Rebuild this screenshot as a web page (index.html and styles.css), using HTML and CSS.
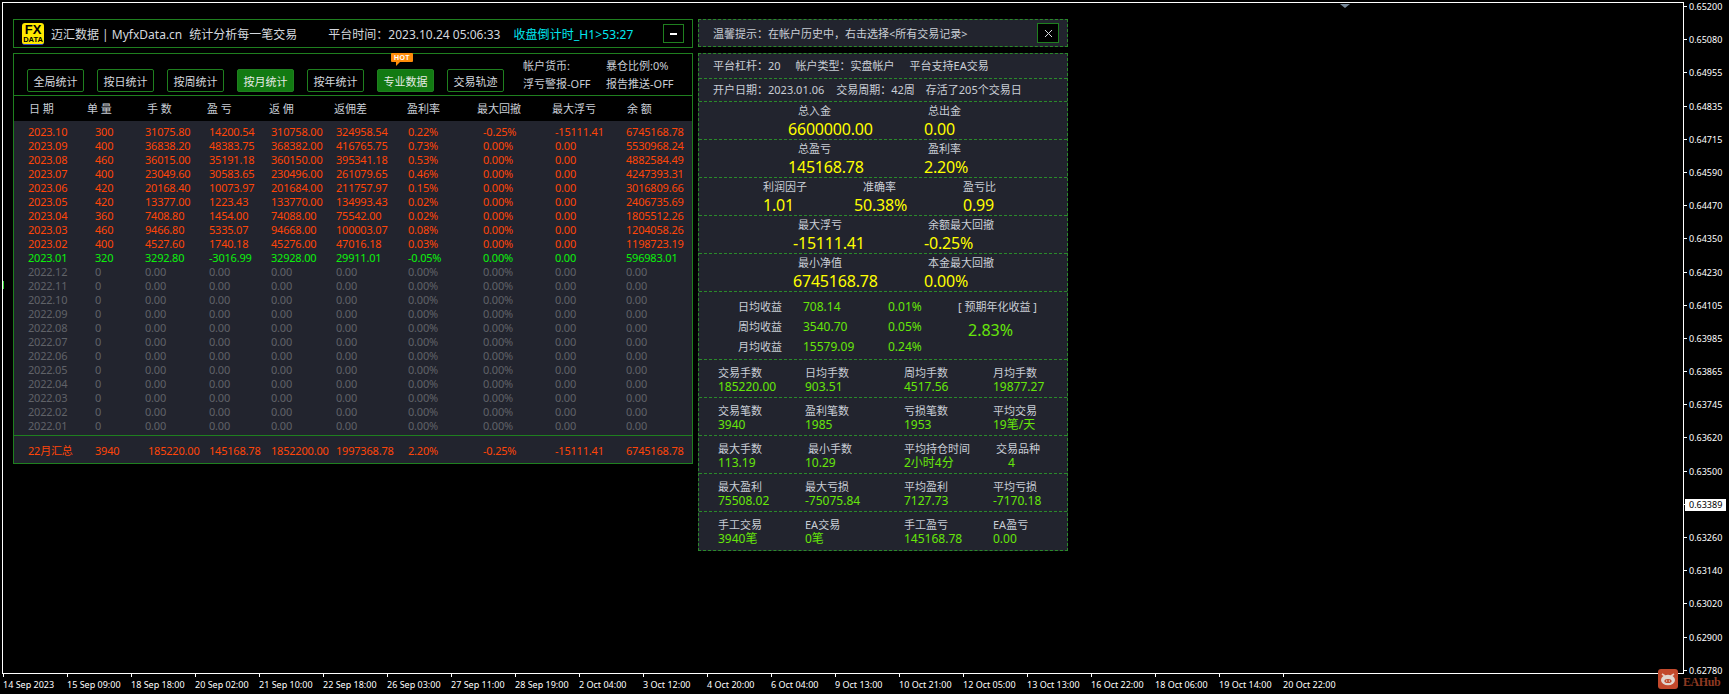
FILE: index.html
```html
<!DOCTYPE html>
<html lang="zh-CN">
<head>
<meta charset="utf-8">
<title>MyfxData</title>
<link rel="stylesheet" href="styles.css">
</head>
<body>
<div class="chart">
  <div class="plot">
    <span class="ask-mark"></span>
    <span class="side-mark"></span>

    <section class="left-win">
      <header class="title-bar">
        <span class="logo"><b>FX</b><i>DATA</i></span>
        <span class="brand">迈汇数据 | MyfxData.cn</span>
        <span class="slogan">统计分析每一笔交易</span>
        <span class="clock">平台时间：2023.10.24 05:06:33</span>
        <span class="countdown">收盘倒计时_H1&gt;53:27</span>
        <span class="min-btn"><i></i></span>
      </header>
      <div class="main-box">
        <div class="toolbar">
          <span class="btn">全局统计</span>
          <span class="btn">按日统计</span>
          <span class="btn">按周统计</span>
          <span class="btn on">按月统计</span>
          <span class="btn">按年统计</span>
          <span class="btn on hot-wrap"><span class="hot">HOT</span>专业数据</span>
          <span class="btn">交易轨迹</span>
          <div class="acct">
            <span>帐户货币:</span><span>暴仓比例:0%</span>
            <span>浮亏警报-OFF</span><span>报告推送-OFF</span>
          </div>
        </div>
        <div class="thead">
          <span>日 期</span><span>单 量</span><span>手 数</span><span>盈 亏</span><span>返 佣</span><span>返佣差</span><span>盈利率</span><span>最大回撤</span><span>最大浮亏</span><span>余 额</span>
        </div>
        <div class="tbody">
          <div class="tr red"><span>2023.10</span><span>300</span><span>31075.80</span><span>14200.54</span><span>310758.00</span><span>324958.54</span><span>0.22%</span><span>-0.25%</span><span>-15111.41</span><span>6745168.78</span></div>
          <div class="tr red"><span>2023.09</span><span>400</span><span>36838.20</span><span>48383.75</span><span>368382.00</span><span>416765.75</span><span>0.73%</span><span>0.00%</span><span>0.00</span><span>5530968.24</span></div>
          <div class="tr red"><span>2023.08</span><span>460</span><span>36015.00</span><span>35191.18</span><span>360150.00</span><span>395341.18</span><span>0.53%</span><span>0.00%</span><span>0.00</span><span>4882584.49</span></div>
          <div class="tr red"><span>2023.07</span><span>400</span><span>23049.60</span><span>30583.65</span><span>230496.00</span><span>261079.65</span><span>0.46%</span><span>0.00%</span><span>0.00</span><span>4247393.31</span></div>
          <div class="tr red"><span>2023.06</span><span>420</span><span>20168.40</span><span>10073.97</span><span>201684.00</span><span>211757.97</span><span>0.15%</span><span>0.00%</span><span>0.00</span><span>3016809.66</span></div>
          <div class="tr red"><span>2023.05</span><span>420</span><span>13377.00</span><span>1223.43</span><span>133770.00</span><span>134993.43</span><span>0.02%</span><span>0.00%</span><span>0.00</span><span>2406735.69</span></div>
          <div class="tr red"><span>2023.04</span><span>360</span><span>7408.80</span><span>1454.00</span><span>74088.00</span><span>75542.00</span><span>0.02%</span><span>0.00%</span><span>0.00</span><span>1805512.26</span></div>
          <div class="tr red"><span>2023.03</span><span>460</span><span>9466.80</span><span>5335.07</span><span>94668.00</span><span>100003.07</span><span>0.08%</span><span>0.00%</span><span>0.00</span><span>1204058.26</span></div>
          <div class="tr red"><span>2023.02</span><span>400</span><span>4527.60</span><span>1740.18</span><span>45276.00</span><span>47016.18</span><span>0.03%</span><span>0.00%</span><span>0.00</span><span>1198723.19</span></div>
          <div class="tr lime"><span>2023.01</span><span>320</span><span>3292.80</span><span>-3016.99</span><span>32928.00</span><span>29911.01</span><span>-0.05%</span><span>0.00%</span><span>0.00</span><span>596983.01</span></div>
          <div class="tr dim"><span>2022.12</span><span>0</span><span>0.00</span><span>0.00</span><span>0.00</span><span>0.00</span><span>0.00%</span><span>0.00%</span><span>0.00</span><span>0.00</span></div>
          <div class="tr dim"><span>2022.11</span><span>0</span><span>0.00</span><span>0.00</span><span>0.00</span><span>0.00</span><span>0.00%</span><span>0.00%</span><span>0.00</span><span>0.00</span></div>
          <div class="tr dim"><span>2022.10</span><span>0</span><span>0.00</span><span>0.00</span><span>0.00</span><span>0.00</span><span>0.00%</span><span>0.00%</span><span>0.00</span><span>0.00</span></div>
          <div class="tr dim"><span>2022.09</span><span>0</span><span>0.00</span><span>0.00</span><span>0.00</span><span>0.00</span><span>0.00%</span><span>0.00%</span><span>0.00</span><span>0.00</span></div>
          <div class="tr dim"><span>2022.08</span><span>0</span><span>0.00</span><span>0.00</span><span>0.00</span><span>0.00</span><span>0.00%</span><span>0.00%</span><span>0.00</span><span>0.00</span></div>
          <div class="tr dim"><span>2022.07</span><span>0</span><span>0.00</span><span>0.00</span><span>0.00</span><span>0.00</span><span>0.00%</span><span>0.00%</span><span>0.00</span><span>0.00</span></div>
          <div class="tr dim"><span>2022.06</span><span>0</span><span>0.00</span><span>0.00</span><span>0.00</span><span>0.00</span><span>0.00%</span><span>0.00%</span><span>0.00</span><span>0.00</span></div>
          <div class="tr dim"><span>2022.05</span><span>0</span><span>0.00</span><span>0.00</span><span>0.00</span><span>0.00</span><span>0.00%</span><span>0.00%</span><span>0.00</span><span>0.00</span></div>
          <div class="tr dim"><span>2022.04</span><span>0</span><span>0.00</span><span>0.00</span><span>0.00</span><span>0.00</span><span>0.00%</span><span>0.00%</span><span>0.00</span><span>0.00</span></div>
          <div class="tr dim"><span>2022.03</span><span>0</span><span>0.00</span><span>0.00</span><span>0.00</span><span>0.00</span><span>0.00%</span><span>0.00%</span><span>0.00</span><span>0.00</span></div>
          <div class="tr dim"><span>2022.02</span><span>0</span><span>0.00</span><span>0.00</span><span>0.00</span><span>0.00</span><span>0.00%</span><span>0.00%</span><span>0.00</span><span>0.00</span></div>
          <div class="tr dim"><span>2022.01</span><span>0</span><span>0.00</span><span>0.00</span><span>0.00</span><span>0.00</span><span>0.00%</span><span>0.00%</span><span>0.00</span><span>0.00</span></div>
        </div>
        <div class="tr red total"><span>22月汇总</span><span>3940</span><span class="nudge">185220.00</span><span>145168.78</span><span>1852200.00</span><span>1997368.78</span><span>2.20%</span><span>-0.25%</span><span>-15111.41</span><span>6745168.78</span></div>
      </div>
    </section>

    <section class="right-win">
      <div class="tip">
        <span>温馨提示：在帐户历史中，右击选择&lt;所有交易记录&gt;</span>
        <span class="close"><svg width="9" height="9" viewBox="0 0 9 9"><path d="M1 1l7 7M8 1l-7 7" stroke="#d8dce0" stroke-width="1" fill="none"/></svg></span>
      </div>
      <div class="stats">
        <div class="info-row r1"><span class="i1">平台杠杆：20</span><span class="i2">帐户类型：实盘帐户</span><span class="i3">平台支持EA交易</span></div>
        <div class="info-row r2"><span class="i1">开户日期：2023.01.06</span><span class="i4">交易周期：42周</span><span class="i5">存活了205个交易日</span></div>

        <div class="big two"><div><span class="lb">总入金</span><span class="val">6600000.00</span></div><div><span class="lb">总出金</span><span class="val">0.00</span></div></div>
        <div class="big two"><div><span class="lb">总盈亏</span><span class="val">145168.78</span></div><div><span class="lb">盈利率</span><span class="val">2.20%</span></div></div>
        <div class="big three"><div><span class="lb">利润因子</span><span class="val">1.01</span></div><div><span class="lb">准确率</span><span class="val out">50.38%</span></div><div><span class="lb">盈亏比</span><span class="val">0.99</span></div></div>
        <div class="big two"><div><span class="lb">最大浮亏</span><span class="val in">-15111.41</span></div><div><span class="lb">余额最大回撤</span><span class="val">-0.25%</span></div></div>
        <div class="big two"><div><span class="lb">最小净值</span><span class="val in">6745168.78</span></div><div><span class="lb">本金最大回撤</span><span class="val">0.00%</span></div></div>

        <div class="avg">
          <div class="avg-grid">
            <span>日均收益</span><b>708.14</b><b>0.01%</b>
            <span>周均收益</span><b>3540.70</b><b>0.05%</b>
            <span>月均收益</span><b>15579.09</b><b>0.24%</b>
          </div>
          <div class="annual"><span>[ 预期年化收益 ]</span><b>2.83%</b></div>
        </div>

        <div class="mini"><div><span>交易手数</span><b>185220.00</b></div><div><span>日均手数</span><b>903.51</b></div><div><span>周均手数</span><b>4517.56</b></div><div><span>月均手数</span><b>19877.27</b></div></div>
        <div class="mini"><div><span>交易笔数</span><b>3940</b></div><div><span>盈利笔数</span><b>1985</b></div><div><span>亏损笔数</span><b>1953</b></div><div><span>平均交易</span><b>19笔/天</b></div></div>
        <div class="mini"><div><span>最大手数</span><b>113.19</b></div><div><span class="shift">最小手数</span><b>10.29</b></div><div><span>平均持仓时间</span><b>2小时4分</b></div><div><span class="shift">交易品种</span><b class="four">4</b></div></div>
        <div class="mini"><div><span>最大盈利</span><b>75508.02</b></div><div><span>最大亏损</span><b>-75075.84</b></div><div><span>平均盈利</span><b>7127.73</b></div><div><span>平均亏损</span><b>-7170.18</b></div></div>
        <div class="mini last"><div><span>手工交易</span><b>3940笔</b></div><div><span>EA交易</span><b>0笔</b></div><div><span>手工盈亏</span><b>145168.78</b></div><div><span>EA盈亏</span><b>0.00</b></div></div>
      </div>
    </section>
  </div>

  <div class="price-axis">
    <span>0.65200</span><span>0.65080</span><span>0.64955</span><span>0.64835</span><span>0.64715</span><span>0.64590</span><span>0.64470</span><span>0.64350</span><span>0.64230</span><span>0.64105</span><span>0.63985</span><span>0.63865</span><span>0.63745</span><span>0.63620</span><span>0.63500</span><span class="now"><b>0.63389</b></span><span>0.63260</span><span>0.63140</span><span>0.63020</span><span>0.62900</span><span>0.62780</span>
  </div>

  <div class="time-axis">
    <span>14 Sep 2023</span><span>15 Sep 09:00</span><span>18 Sep 18:00</span><span>20 Sep 02:00</span><span>21 Sep 10:00</span><span>22 Sep 18:00</span><span>26 Sep 03:00</span><span>27 Sep 11:00</span><span>28 Sep 19:00</span><span>2 Oct 04:00</span><span>3 Oct 12:00</span><span>4 Oct 20:00</span><span>6 Oct 04:00</span><span>9 Oct 13:00</span><span>10 Oct 21:00</span><span>12 Oct 05:00</span><span>13 Oct 13:00</span><span>16 Oct 22:00</span><span>18 Oct 06:00</span><span>19 Oct 14:00</span><span>20 Oct 22:00</span>
  </div>

  <div class="watermark">
    <svg class="pig" width="20" height="20" viewBox="0 0 20 20">
      <rect width="20" height="20" rx="3" fill="#c2492c"/>
      <path d="M4 5l3 2M16 5l-3 2" stroke="#e8c9bd" stroke-width="1.6" fill="none"/>
      <ellipse cx="10" cy="11" rx="7" ry="5.2" fill="#e0d6cf"/>
      <ellipse cx="10" cy="12" rx="3.6" ry="2.1" fill="#c2492c"/>
      <circle cx="8.6" cy="12" r=".7" fill="#e0d6cf"/>
      <circle cx="11.4" cy="12" r=".7" fill="#e0d6cf"/>
    </svg>
    <span>EAHub</span>
  </div>
</div>
</body>
</html>
```

FILE: styles.css
```css
* { box-sizing: border-box; }
html, body { margin: 0; padding: 0; background: #000; }
body {
  font-family: "Noto Sans", "Noto Sans CJK SC", sans-serif;
  font-size: 11px;
  color: #c9ced6;
}
span, b, i { font-weight: 400; font-style: normal; }

.chart {
  position: relative;
  width: 1729px;
  height: 694px;
  padding: 2px 0 0 2px;
  display: grid;
  grid-template-columns: 1682px 45px;
  grid-template-rows: 672px 20px;
  overflow: hidden;
}

.plot {
  position: relative;
  border: 1px solid #fff;
  background: #000;
}
.ask-mark {
  position: absolute;
  left: 1337px;
  top: 1px;
  border-left: 5px solid transparent;
  border-right: 5px solid transparent;
  border-top: 4px solid #778899;
}
.side-mark {
  position: absolute;
  left: 0;
  top: 278px;
  width: 1px;
  height: 8px;
  background: #32cd32;
}

/* ---- left window ---- */
.left-win {
  position: absolute;
  left: 10px;
  top: 16px;
  width: 680px;
  display: flex;
  flex-direction: column;
  gap: 5px;
}
.title-bar {
  height: 29px;
  border: 1px solid #1f7f1f;
  display: flex;
  align-items: center;
  padding: 0 8px;
  font-size: 12px;
  color: #d4d8de;
  background: #000;
}
.logo {
  width: 22px;
  height: 22px;
  border-radius: 3px;
  background: #ffe800;
  border-bottom: 1px solid #2b46c8;
  display: flex;
  flex-direction: column;
  align-items: center;
  color: #000;
  font-family: "Liberation Sans", sans-serif;
  line-height: 1;
  padding-top: 1px;
}
.logo b { font-size: 13px; font-weight: 700; line-height: 12px; }
.logo i { font-size: 7.5px; font-weight: 700; line-height: 8px; }
.brand { margin-left: 7px; }
.slogan { margin-left: 7px; }
.clock { margin-left: 31px; }
.countdown { margin-left: 13px; color: #00e8f0; letter-spacing: .1px; }
.min-btn {
  margin-left: auto;
  width: 21px;
  height: 19px;
  border: 1px solid #1f7f1f;
  display: flex;
  align-items: center;
  justify-content: center;
}
.min-btn i { width: 7px; height: 2px; background: #fff; }

.main-box {
  border: 1px solid #1f7f1f;
  height: 411px;
  display: flex;
  flex-direction: column;
  background: #22242e;
}
.toolbar {
  height: 42px;
  flex: none;
  background: #000;
  border-bottom: 1px solid #1f7f1f;
  padding: 15px 0 3px 13px;
  display: flex;
  gap: 13px;
}
.btn {
  position: relative;
  width: 57px;
  height: 23px;
  border: 1px solid #1f7f1f;
  border-radius: 2px;
  color: #d4d8de;
  display: flex;
  align-items: center;
  justify-content: center;
}
.btn.on { background: #127a12; color: #e6ebe6; }
.hot {
  position: absolute;
  left: 13px;
  top: -17px;
  width: 22px;
  height: 9px;
  background: #ff8c0a;
  border-radius: 1px;
  color: #fff;
  font: 700 7px/9px "Liberation Sans", sans-serif;
  text-align: center;
  letter-spacing: .4px;
}
.hot::after {
  content: "";
  position: absolute;
  left: 5px;
  top: 9px;
  border-top: 4px solid #ff8c0a;
  border-right: 4px solid transparent;
}
.acct {
  margin: -12px 0 0 6px;
  display: grid;
  grid-template-columns: 83px auto;
  grid-auto-rows: 18px;
  line-height: 18px;
  align-self: flex-start;
  white-space: nowrap;
}
.thead {
  height: 25px;
  flex: none;
  background: #000;
  display: grid;
  grid-template-columns: 58px 60px 60px 62px 65px 73px 70px 75px 75px auto;
  padding-left: 15px;
  line-height: 25px;
  white-space: nowrap;
}
.tbody { padding-top: 4px; height: 314px; flex: none; }
.tr {
  height: 14px;
  line-height: 14px;
  display: grid;
  grid-template-columns: 67px 50px 64px 62px 65px 72px 75px 72px 71px auto;
  padding-left: 14px;
  white-space: nowrap;
  letter-spacing: -.2px;
}
.red { color: #ff4508; }
.lime { color: #0cf00c; }
.dim { color: #606268; }
.total {
  flex: 1;
  height: auto;
  line-height: 29px;
  border-top: 1px solid #1f7f1f;
}
.nudge { padding-left: 3px; }

/* ---- right window ---- */
.right-win {
  position: absolute;
  left: 695px;
  top: 16px;
  width: 370px;
  display: flex;
  flex-direction: column;
  gap: 6px;
}
.tip {
  height: 28px;
  border: 1px dashed #2a8a2a;
  background: #22242e;
  padding: 0 8px 0 14px;
  display: flex;
  align-items: center;
  justify-content: space-between;
}
.close {
  width: 22px;
  height: 20px;
  border: 1px solid #1f7f1f;
  background: #000;
  display: flex;
  align-items: center;
  justify-content: center;
}
.stats {
  height: 498px;
  border: 1px dashed #2a8a2a;
  background: #22242e;
  display: flex;
  flex-direction: column;
}
.info-row {
  flex: none;
  border-bottom: 1px dashed #2a8a2a;
  padding: 0 0 2px 14px;
  display: flex;
  align-items: center;
  white-space: nowrap;
}
.r1 { height: 25px; }
.r2 { height: 23px; }
.i2 { margin-left: 15px; }
.i3 { margin-left: 15px; }
.i4 { margin-left: 12px; }
.i5 { margin-left: 11px; }

.big {
  flex: none;
  height: 38px;
  border-bottom: 1px dashed #2a8a2a;
  padding-top: 1px;
  display: grid;
}
.two { grid-template-columns: 136px auto; padding-left: 89px; }
.three { grid-template-columns: 100px 100px auto; padding-left: 64px; }
.lb { display: block; line-height: 15px; padding-left: 10px; }
.two > div + div .lb { padding-left: 4px; }
.three .lb { padding-left: 0; }
.val {
  display: block;
  font-size: 16px;
  line-height: 20px;
  margin-top: 1px;
  color: #ffff00;
  letter-spacing: -.2px;
  white-space: nowrap;
}
.val.in { padding-left: 5px; }
.val.out { margin-left: -9px; }

.avg {
  flex: none;
  height: 68px;
  border-bottom: 1px dashed #2a8a2a;
  display: flex;
  padding: 5px 0 0 39px;
}
.avg-grid {
  display: grid;
  grid-template-columns: 65px 85px 70px;
  grid-auto-rows: 20px;
  line-height: 20px;
  white-space: nowrap;
}
.avg-grid b { font-size: 12px; color: #66e60a; }
.annual { display: flex; flex-direction: column; white-space: nowrap; line-height: 20px; }
.annual b { font-size: 16px; color: #66e60a; margin: 1px 0 0 10px; line-height: 24px; }

.mini {
  flex: none;
  height: 38px;
  border-bottom: 1px dashed #2a8a2a;
  padding: 6px 0 0 19px;
  display: grid;
  grid-template-columns: 87px 99px 89px auto;
}
.mini.last { border-bottom: 0; }
.mini span { display: block; line-height: 13px; white-space: nowrap; }
.mini b { display: block; font-size: 12px; line-height: 13px; margin-top: 1px; color: #66e60a; white-space: nowrap; }
.mini .shift { padding-left: 3px; }
.mini .four { padding-left: 15px; }

/* ---- axes ---- */
.price-axis {
  margin-top: -12px;
  display: flex;
  flex-direction: column;
  font: 9px/33.2px "Noto Sans", sans-serif;
  color: #fff;
  white-space: nowrap;
}
.price-axis span {
  flex: none;
  height: 33.2px;
  position: relative;
  padding-left: 5px;
}
.price-axis span::before {
  content: "";
  position: absolute;
  left: 0;
  top: 16px;
  width: 3px;
  height: 1px;
  background: #fff;
}
.price-axis .now b {
  display: inline-block;
  vertical-align: middle;
  width: 41px;
  height: 12px;
  margin-left: -4px;
  padding-left: 4px;
  background: #fff;
  color: #000;
  line-height: 12px;
}
.time-axis {
  grid-column: 1 / -1;
  display: flex;
  font: 9px/17px "Noto Sans", sans-serif;
  color: #fff;
  white-space: nowrap;
  padding-top: 1px;
}
.time-axis span {
  flex: none;
  width: 64px;
  position: relative;
  padding-top: 1px;
  padding-left: 1px;
}
.time-axis span::before {
  content: "";
  position: absolute;
  left: 1px;
  top: -1px;
  width: 1px;
  height: 3px;
  background: #fff;
}
.watermark {
  position: absolute;
  left: 1658px;
  top: 669px;
  display: flex;
  align-items: center;
  gap: 5px;
}
.watermark span {
  color: #8e3a22;
  font: 700 12px/14px "Liberation Serif", serif;
  letter-spacing: -.4px;
  margin-top: 5px;
}
.pig { display: block; }
```
